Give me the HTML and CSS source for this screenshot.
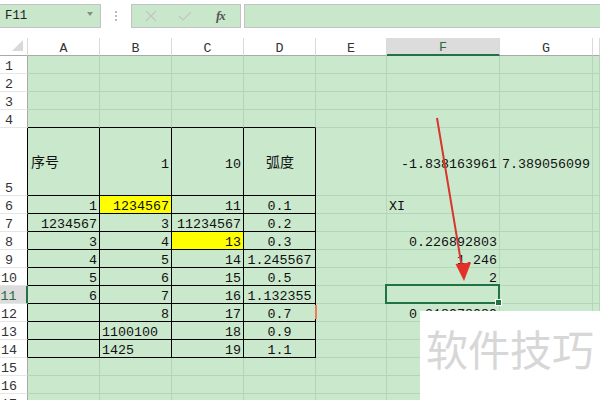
FILE: index.html
```
<!DOCTYPE html>
<html lang="zh-CN">
<head>
<meta charset="utf-8">
<title>Sheet</title>
<link rel="stylesheet" href="styles.css">
</head>
<body>
<div class="toolbar">
  <div class="namebox"><span class="nb-text">F11</span><span class="dd"></span></div>
  <div class="sep"><span></span><span></span><span></span></div>
  <div class="fxgroup">
    <svg class="ico-x" width="12" height="12" viewBox="0 0 12 12"><path d="M1 1 L11 11 M11 1 L1 11" stroke="#c4c4c4" stroke-width="1.2" fill="none"/></svg>
    <svg class="ico-v" width="14" height="10" viewBox="0 0 14 10"><path d="M1 5 L5 9 L13 1" stroke="#c4c4c4" stroke-width="1.2" fill="none"/></svg>
    <span class="fx">fx</span>
  </div>
  <div class="formula"></div>
</div>

<div class="grid">
  <div class="corner"><svg width="12" height="12" viewBox="0 0 12 12"><path d="M11 0 L11 11 L0 11 Z" fill="#d9d9d9"/></svg></div>
  <div class="ch">A</div><div class="ch">B</div><div class="ch">C</div><div class="ch">D</div><div class="ch">E</div><div class="ch sel">F</div><div class="ch">G</div><div class="ch"></div>

  <div class="rh">1</div><div class="c"></div><div class="c"></div><div class="c"></div><div class="c"></div><div class="c"></div><div class="c"></div><div class="c"></div><div class="c"></div>
  <div class="rh">2</div><div class="c"></div><div class="c"></div><div class="c"></div><div class="c"></div><div class="c"></div><div class="c"></div><div class="c"></div><div class="c"></div>
  <div class="rh">3</div><div class="c"></div><div class="c"></div><div class="c"></div><div class="c"></div><div class="c"></div><div class="c"></div><div class="c"></div><div class="c"></div>
  <div class="rh">4</div><div class="c tb"></div><div class="c tb"></div><div class="c tb"></div><div class="c tb"></div><div class="c"></div><div class="c"></div><div class="c"></div><div class="c"></div>

  <div class="rh tl">5</div><div class="c t tall cjk">序号</div><div class="c t tall r">1</div><div class="c t tall r">10</div><div class="c t tall m cjk">弧度</div><div class="c tall"></div><div class="c tall r">-1.838163961</div><div class="c tall r">7.389056099</div><div class="c tall"></div>

  <div class="rh tl">6</div><div class="c t r">1</div><div class="c t r y">1234567</div><div class="c t r">11</div><div class="c t m">0.1</div><div class="c"></div><div class="c">XI</div><div class="c"></div><div class="c"></div>
  <div class="rh tl">7</div><div class="c t r">1234567</div><div class="c t r">3</div><div class="c t r">11234567</div><div class="c t m">0.2</div><div class="c"></div><div class="c"></div><div class="c"></div><div class="c"></div>
  <div class="rh tl">8</div><div class="c t r">3</div><div class="c t r">4</div><div class="c t r y">13</div><div class="c t m">0.3</div><div class="c"></div><div class="c r">0.226892803</div><div class="c"></div><div class="c"></div>
  <div class="rh tl">9</div><div class="c t r">4</div><div class="c t r">5</div><div class="c t r">14</div><div class="c t m">1.245567</div><div class="c"></div><div class="c r">1.246</div><div class="c"></div><div class="c"></div>
  <div class="rh tl">10</div><div class="c t r">5</div><div class="c t r">6</div><div class="c t r">15</div><div class="c t m">0.5</div><div class="c"></div><div class="c r">2</div><div class="c"></div><div class="c"></div>
  <div class="rh tl sel">11</div><div class="c t r">6</div><div class="c t r">7</div><div class="c t r">16</div><div class="c t m">1.132355</div><div class="c"></div><div class="c active"></div><div class="c"></div><div class="c"></div>
  <div class="rh tl">12</div><div class="c t"></div><div class="c t r">8</div><div class="c t r">17</div><div class="c t m mark">0.7</div><div class="c"></div><div class="c r">0.218978089</div><div class="c"></div><div class="c"></div>
  <div class="rh tl">13</div><div class="c t"></div><div class="c t">1100100</div><div class="c t r">18</div><div class="c t m">0.9</div><div class="c"></div><div class="c"></div><div class="c"></div><div class="c"></div>
  <div class="rh tl">14</div><div class="c t"></div><div class="c t">1425</div><div class="c t r">19</div><div class="c t m">1.1</div><div class="c"></div><div class="c"></div><div class="c"></div><div class="c"></div>

  <div class="rh">15</div><div class="c"></div><div class="c"></div><div class="c"></div><div class="c"></div><div class="c"></div><div class="c"></div><div class="c"></div><div class="c"></div>
  <div class="rh">16</div><div class="c"></div><div class="c"></div><div class="c"></div><div class="c"></div><div class="c"></div><div class="c"></div><div class="c"></div><div class="c"></div>
  <div class="rh">17</div><div class="c"></div><div class="c"></div><div class="c"></div><div class="c"></div><div class="c"></div><div class="c"></div><div class="c"></div><div class="c"></div>
</div>

<svg class="arrow" width="600" height="400" viewBox="0 0 600 400">
  <line x1="437" y1="118" x2="462" y2="268" stroke="#d8352c" stroke-width="2"/>
  <polygon points="455.5,264 471,262.5 464,281" fill="#e3302a"/>
</svg>

<div class="watermark">软件技巧</div>
</body>
</html>
```
FILE: styles.css
```
html, body {
  margin: 0;
  padding: 0;
  background: #ffffff;
  overflow: hidden;
  width: 600px;
  height: 400px;
  font-family: "Liberation Mono", "Noto Sans CJK SC", monospace;
  color: #111;
}

.toolbar {
  display: flex;
  align-items: flex-start;
  height: 38px;
  padding-top: 4px;
  box-sizing: border-box;
  background: #ffffff;
}

.namebox {
  width: 101px;
  height: 24px;
  box-sizing: border-box;
  background: #c9e7cb;
  border: 1px solid #c3c3c3;
  border-left: none;
  display: flex;
  align-items: center;
  justify-content: space-between;
  padding: 0 7px 0 5px;
  font-size: 12.3px;
  color: #222;
}

.dd {
  width: 0;
  height: 0;
  border-left: 3.5px solid transparent;
  border-right: 3.5px solid transparent;
  border-top: 4px solid #8a8a8a;
  margin-top: -4px;
}

.sep {
  width: 30px;
  height: 24px;
  display: flex;
  flex-direction: column;
  align-items: center;
  justify-content: center;
  gap: 2px;
}

.sep span {
  width: 2px;
  height: 2px;
  background: #b9b9b9;
}

.fxgroup {
  width: 110px;
  height: 24px;
  box-sizing: border-box;
  background: #c9e7cb;
  border: 1px solid #c3c3c3;
  display: flex;
  align-items: center;
  padding-left: 13px;
}

.ico-x { margin-right: 21px; }
.ico-v { margin-right: 24px; }

.fx {
  font-family: "Liberation Serif", serif;
  font-style: italic;
  font-weight: bold;
  font-size: 13px;
  color: #555;
  letter-spacing: -1px;
}

.formula {
  flex: 1;
  height: 24px;
  margin-left: 3px;
  box-sizing: border-box;
  background: #c9e7cb;
  border: 1px solid #c3c3c3;
  border-right: none;
}

.grid {
  display: grid;
  grid-template-columns: 28px 72px 72px 72px 72px 71px 113px 93px 1fr;
  grid-template-rows: 18px repeat(4, 18px) 68px repeat(12, 18px);
  font-size: 13.33px;
}

.grid > div {
  box-sizing: border-box;
  display: flex;
  align-items: flex-end;
  line-height: 12px;
  white-space: nowrap;
  min-width: 0;
}

.corner {
  background: #fff;
  border-right: 1px solid #dadada;
  border-bottom: 1px solid #a9a9a9;
  justify-content: flex-end;
  padding: 0 3px 3px 0;
}

.corner svg { display: block; }

.ch {
  background: #fff;
  border-right: 1px solid #dadada;
  border-bottom: 1px solid #a9a9a9;
  justify-content: center;
  color: #333;
}

.ch.sel {
  background: #dcdcdc;
  border-bottom: 2px solid #217346;
  color: #2a6a45;
}

.rh {
  background: #fff;
  border-right: 1px solid #a9a9a9;
  border-bottom: 1px solid #e6e6e6;
  justify-content: center;
  padding-right: 9px;
  color: #333;
}

.rh.tl { border-right-color: #000; }

.rh.sel {
  background: #dcdcdc;
  border-right: 2px solid #217346;
  color: #2a6a45;
}

.c {
  background: #cae8cc;
  border-right: 1px solid #b5d4b8;
  border-bottom: 1px solid #b5d4b8;
  padding: 0 2px;
}

.c.t {
  border-right-color: #000;
  border-bottom-color: #000;
}

.c.tb { border-bottom-color: #000; }

.c.y { background: #ffff00; }

.r { justify-content: flex-end; }
.m { justify-content: center; }

.tall {
  align-items: center !important;
  line-height: 17px !important;
  padding-top: 6px !important;
}

.cjk {
  font-family: "Noto Sans CJK SC", sans-serif;
  font-size: 14px;
  padding-left: 3px;
}

.tall.cjk { padding-top: 0 !important; }

.active { position: relative; }

.active::before {
  content: "";
  position: absolute;
  left: -2px;
  top: -2px;
  right: -1px;
  bottom: -1px;
  border: 2px solid #217346;
}

.active::after {
  content: "";
  position: absolute;
  right: -3px;
  bottom: -3px;
  width: 5px;
  height: 5px;
  background: #217346;
  border: 1px solid #fff;
  box-sizing: content-box;
}

.mark { position: relative; }

.mark::after {
  content: "";
  position: absolute;
  right: -2px;
  top: 1px;
  width: 2px;
  height: 14px;
  background: #ef7b5c;
}

.arrow {
  position: absolute;
  left: 0;
  top: 0;
  pointer-events: none;
}

.watermark {
  position: absolute;
  left: 420px;
  top: 311px;
  width: 180px;
  height: 89px;
  background: #ffffff;
  color: #d7d7d7;
  font-family: "Noto Sans CJK SC", sans-serif;
  font-size: 42px;
  line-height: 42px;
  padding: 16px 0 0 6px;
  box-sizing: border-box;
  white-space: nowrap;
}
```
